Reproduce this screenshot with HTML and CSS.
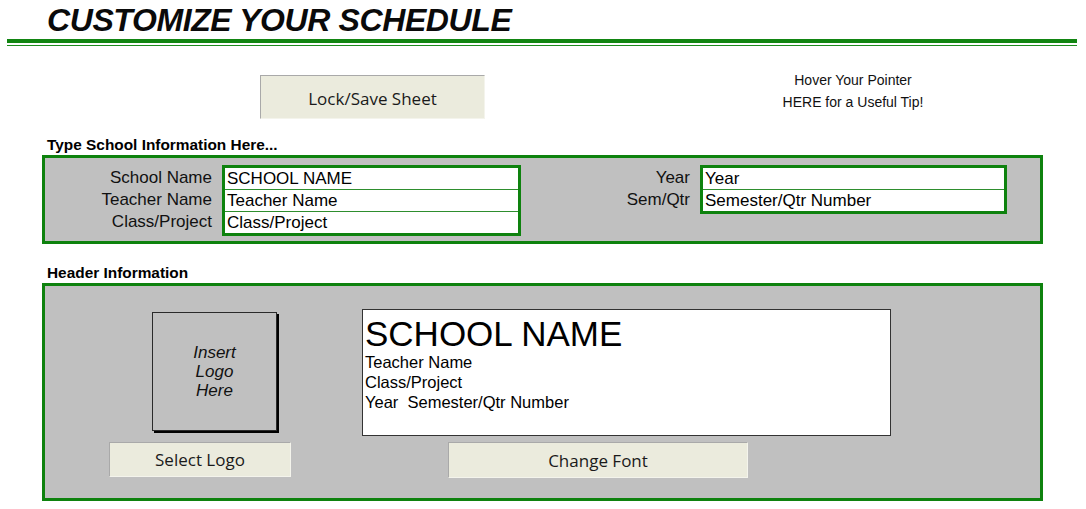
FILE: index.html
```html
<!DOCTYPE html>
<html lang="en">
<head>
<meta charset="utf-8">
<title>Customize Your Schedule</title>
<link rel="stylesheet" href="styles.css">
</head>
<body>
<div class="sheet">
  <h1 class="title">CUSTOMIZE YOUR SCHEDULE</h1>
  <div class="rule"></div>

  <div class="toolbar">
    <button class="btn btn-lock">Lock/Save Sheet</button>
    <div class="tip">Hover Your Pointer<br>HERE for a Useful Tip!</div>
  </div>

  <div class="section-label label-info">Type School Information Here...</div>
  <section class="panel panel-info">
    <div class="field-group group-left">
      <div class="labels">
        <span>School Name</span>
        <span>Teacher Name</span>
        <span>Class/Project</span>
      </div>
      <div class="fields">
        <div class="cell">SCHOOL NAME</div>
        <div class="cell">Teacher Name</div>
        <div class="cell">Class/Project</div>
      </div>
    </div>
    <div class="field-group group-right">
      <div class="labels">
        <span>Year</span>
        <span>Sem/Qtr</span>
      </div>
      <div class="fields">
        <div class="cell">Year</div>
        <div class="cell">Semester/Qtr Number</div>
      </div>
    </div>
  </section>

  <div class="section-label label-header">Header Information</div>
  <section class="panel panel-header">
    <div class="logo-col">
      <div class="logo-box">Insert<br>Logo<br>Here</div>
      <button class="btn btn-logo">Select Logo</button>
    </div>
    <div class="preview-col">
      <div class="preview">
        <div class="preview-name">SCHOOL NAME</div>
        <div class="preview-line">Teacher Name</div>
        <div class="preview-line">Class/Project</div>
        <div class="preview-line">Year&nbsp;&nbsp;Semester/Qtr Number</div>
      </div>
      <button class="btn btn-font">Change Font</button>
    </div>
  </section>
</div>
</body>
</html>
```

FILE: styles.css
```css
* {
  box-sizing: border-box;
}

html, body {
  margin: 0;
  padding: 0;
  background: #ffffff;
}

body {
  font-family: "Liberation Sans", Arial, sans-serif;
  color: #000;
  width: 1086px;
  height: 509px;
  overflow: hidden;
}

.sheet {
  display: flex;
  flex-direction: column;
}

/* ---- title and double green rule ---- */
.title {
  margin: 0 0 0 47px;
  padding-top: 2px;
  font-size: 32px;
  line-height: 37px;
  font-weight: bold;
  font-style: italic;
  letter-spacing: -0.4px;
  color: #0a0a0a;
}

.rule {
  margin: 0 9px 0 7px;
  height: 7px;
  border-top: 4px solid #128512;
  border-bottom: 1px solid #1f8a1f;
}

/* ---- top controls ---- */
.toolbar {
  display: flex;
  align-items: flex-start;
  margin-top: 23px;
  padding-left: 260px;
}

.btn {
  font-family: "Open Sans", "Noto Sans", sans-serif;
  font-size: 17px;
  color: #1a1a1a;
  background: #ebebdd;
  border: 1px solid #f4f4ec;
  border-top-color: #a9a9a9;
  border-left-color: #a9a9a9;
  padding: 0;
  margin: 0;
  cursor: pointer;
}

.btn-lock {
  width: 225px;
  height: 44px;
  margin-top: 6px;
  padding-top: 3px;
}

.tip {
  width: 200px;
  margin-left: 268px;
  font-size: 14px;
  line-height: 22px;
  text-align: center;
  color: #111;
}

/* ---- section captions ---- */
.section-label {
  margin-left: 47px;
  font-size: 15.4px;
  font-weight: bold;
  line-height: 18px;
}

.label-info {
  margin-top: 17px;
  margin-bottom: 1px;
}

.label-header {
  margin-top: 20px;
  margin-bottom: 1px;
}

/* ---- grey framed panels ---- */
.panel {
  margin-left: 42px;
  width: 1001px;
  background: #c0c0c0;
  border: 3px solid #0e820e;
}

.panel-info {
  display: flex;
  align-items: flex-start;
  padding: 7px 0 5px 0;
}

.field-group {
  display: flex;
  align-items: flex-start;
  column-gap: 10px;
}

.group-left .labels {
  width: 167px;
}

.group-left .fields {
  width: 299px;
}

.group-right {
  margin-left: 10px;
}

.group-right .labels {
  width: 159px;
}

.group-right .fields {
  width: 307px;
}

.labels {
  display: flex;
  flex-direction: column;
  align-items: flex-end;
  padding-top: 2px;
  font-size: 17px;
  line-height: 22px;
  color: #111;
}

.fields {
  border: 3px solid #0e820e;
  background: #ffffff;
}

.cell {
  height: 21px;
  padding-left: 2px;
  font-size: 17px;
  line-height: 21px;
  white-space: nowrap;
}

.cell + .cell {
  height: 22px;
  border-top: 1px solid #2e8e2e;
}

/* ---- header layout panel ---- */
.panel-header {
  display: flex;
  align-items: flex-start;
  padding-bottom: 20px;
}

.logo-col {
  width: 317px;
  display: flex;
  flex-direction: column;
  align-items: flex-start;
}

.logo-box {
  margin-top: 26px;
  margin-left: 107px;
  width: 125px;
  height: 119px;
  border: 1px solid #2a2a2a;
  box-shadow: 2px 2px 0 #000;
  display: flex;
  align-items: center;
  justify-content: center;
  text-align: center;
  font-style: italic;
  font-size: 17px;
  line-height: 19px;
  color: #111;
}

.btn-logo {
  margin-top: 11px;
  margin-left: 64px;
  width: 182px;
  height: 35px;
}

.preview-col {
  display: flex;
  flex-direction: column;
  align-items: flex-start;
}

.preview {
  margin-top: 23px;
  width: 529px;
  height: 127px;
  background: #ffffff;
  border: 1px solid #333;
  padding: 6px 0 0 2px;
}

.preview-name {
  font-size: 35px;
  line-height: 36px;
}

.preview-line {
  font-size: 16.5px;
  line-height: 20px;
  white-space: nowrap;
}

.btn-font {
  margin-top: 6px;
  margin-left: 86px;
  width: 300px;
  height: 36px;
}
```
